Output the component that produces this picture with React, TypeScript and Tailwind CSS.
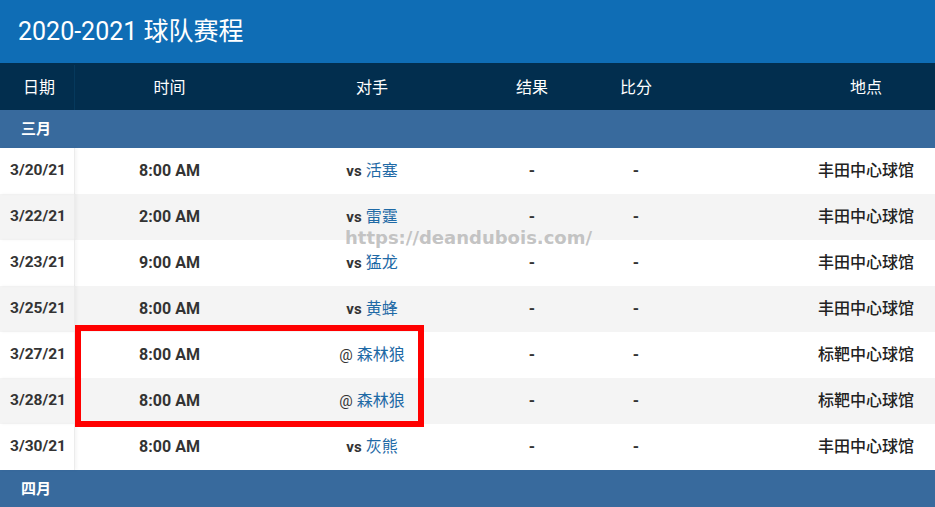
import React from 'react';

interface Game {
  date: string;
  time: string;
  home: boolean;
  team: string;
  venue: string;
}

const march: Game[] = [
  { date: '3/20/21', time: '8:00 AM', home: true, team: '活塞', venue: '丰田中心球馆' },
  { date: '3/22/21', time: '2:00 AM', home: true, team: '雷霆', venue: '丰田中心球馆' },
  { date: '3/23/21', time: '9:00 AM', home: true, team: '猛龙', venue: '丰田中心球馆' },
  { date: '3/25/21', time: '8:00 AM', home: true, team: '黄蜂', venue: '丰田中心球馆' },
  { date: '3/27/21', time: '8:00 AM', home: false, team: '森林狼', venue: '标靶中心球馆' },
  { date: '3/28/21', time: '8:00 AM', home: false, team: '森林狼', venue: '标靶中心球馆' },
  { date: '3/30/21', time: '8:00 AM', home: true, team: '灰熊', venue: '丰田中心球馆' },
];

const cols = 'grid grid-cols-[75px_189px_216px_104px_104px_109px_138px]';
const font = { fontFamily: 'Roboto, "Noto Sans CJK SC", sans-serif' };

function MonthRow({ label }: { label: string }) {
  return (
    <div className="h-[38px] bg-[#386a9d] flex items-center pl-[21px] text-[15px] font-bold text-white">
      {label}
    </div>
  );
}

export default function App() {
  return (
    <div className="relative w-[935px] h-[507px] overflow-hidden bg-white" style={font}>
      {/* Title */}
      <div className="h-[63px] bg-[#0f6db5] flex items-center pl-[18px] pt-[1px]">
        <h1 className="text-[25px] text-white font-normal">2020-2021 球队赛程</h1>
      </div>

      {/* Column headers */}
      <div className={`${cols} h-[47px] pt-[2px] bg-[#022e4e] text-white text-[16px]`}>
        <div className="flex items-center pl-[23px] border-r border-[#06395c]">日期</div>
        <div className="flex items-center justify-center">时间</div>
        <div className="flex items-center justify-center">对手</div>
        <div className="flex items-center justify-center">结果</div>
        <div className="flex items-center justify-center">比分</div>
        <div />
        <div className="flex items-center justify-center">地点</div>
      </div>

      <MonthRow label="三月" />

      {march.map((g, i) => (
        <div
          key={g.date}
          className={`${cols} h-[46px] text-[16px] text-[#333] ${i % 2 === 1 ? 'bg-[#f4f4f4]' : 'bg-white'}`}
        >
          <div className="flex items-center pl-[10px] text-[15.5px] font-bold border-r border-[#ececec] shadow-[2px_0_3px_rgba(0,0,0,0.04)]">
            {g.date}
          </div>
          <div className="flex items-center justify-center font-bold">{g.time}</div>
          <div className="flex items-center justify-center gap-[4px]">
            {g.home ? <span className="font-bold text-[15px]">vs</span> : <span className="text-[15px]">@</span>}
            <span className="text-[#1f6aa6]">{g.team}</span>
          </div>
          <div className="flex items-center justify-center font-bold">-</div>
          <div className="flex items-center justify-center font-bold">-</div>
          <div />
          <div className="flex items-center justify-center font-medium text-[#222]">{g.venue}</div>
        </div>
      ))}

      <MonthRow label="四月" />

      {/* Watermark */}
      <div
        className="absolute left-[345px] top-[224px] text-[18px] font-bold text-[#bcbcbc]/90 pointer-events-none"
        style={{ fontFamily: '"DejaVu Sans", sans-serif' }}
      >
        https://deandubois.com/
      </div>

      {/* Highlight box */}
      <div className="absolute left-[75px] top-[325px] w-[349px] h-[102px] border-[6px] border-[#ff0000] pointer-events-none" />
    </div>
  );
}
